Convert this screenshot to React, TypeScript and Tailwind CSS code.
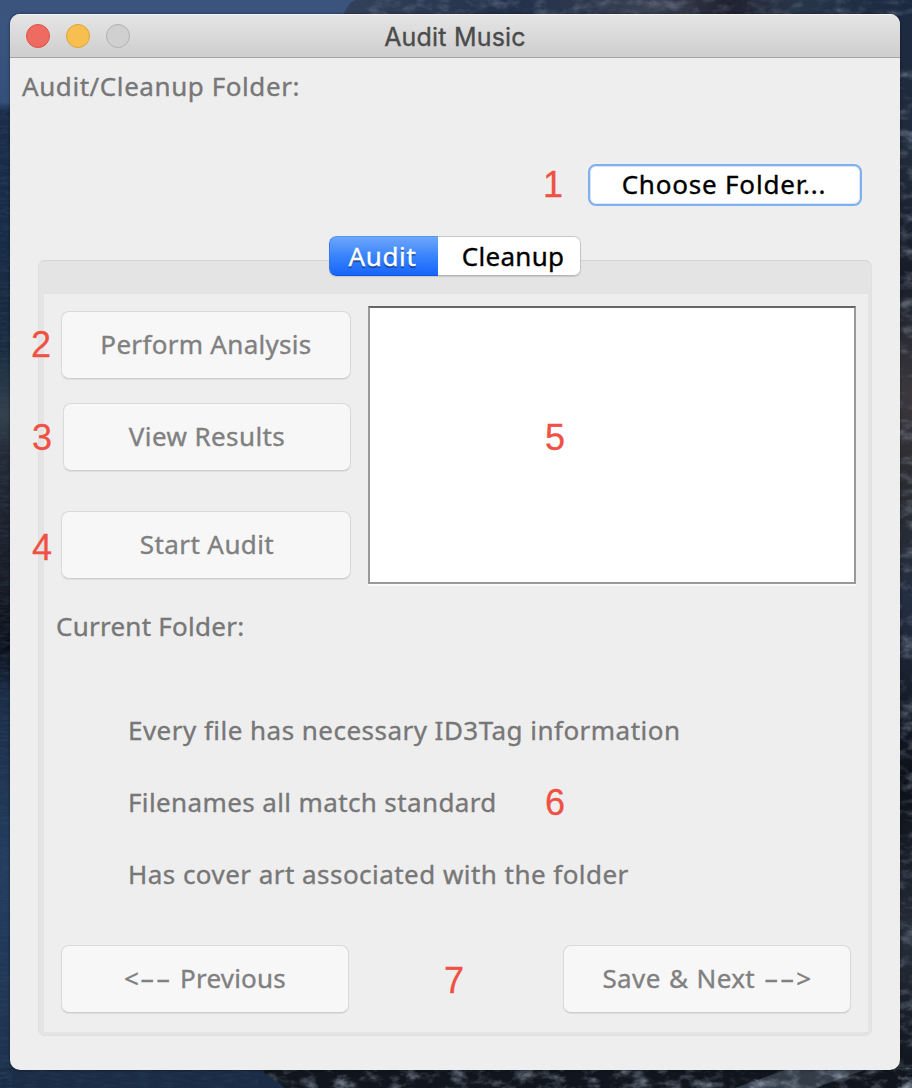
import type { ReactNode } from "react";

const annotations = [
  { n: 1, place: "left-[543px] top-[167px]" },
  { n: 2, place: "left-[31px] top-[327px]" },
  { n: 3, place: "left-[32px] top-[420px]" },
  { n: 4, place: "left-[32px] top-[530px]" },
  { n: 5, place: "left-[545px] top-[420px]" },
  { n: 6, place: "left-[545px] top-[785px]" },
  { n: 7, place: "left-[444px] top-[963px]" },
];

const checks = [
  { text: "Every file has necessary ID3Tag information", spacing: "tracking-[0.47px]" },
  { text: "Filenames all match standard", spacing: "tracking-[0.38px]" },
  { text: "Has cover art associated with the folder", spacing: "tracking-[0.46px]" },
];

function Wallpaper() {
  return (
    <svg className="absolute inset-0 h-full w-full" viewBox="0 0 912 1088" preserveAspectRatio="none" aria-hidden="true">
      <defs>
        <linearGradient id="left" x1="0" y1="0" x2="0" y2="1">
          <stop offset="0" stopColor="#3b5682" />
          <stop offset="0.094" stopColor="#34507a" />
          <stop offset="0.102" stopColor="#1a2c49" />
          <stop offset="0.2" stopColor="#182b46" />
          <stop offset="0.32" stopColor="#182a3d" />
          <stop offset="0.38" stopColor="#34414c" />
          <stop offset="0.42" stopColor="#242935" />
          <stop offset="0.54" stopColor="#191a24" />
          <stop offset="0.595" stopColor="#0b0e17" />
          <stop offset="0.64" stopColor="#1b2d46" />
          <stop offset="0.8" stopColor="#243d60" />
          <stop offset="1" stopColor="#1d314d" />
        </linearGradient>
        <linearGradient id="right" x1="0" y1="0" x2="0" y2="1">
          <stop offset="0" stopColor="#1c2a42" />
          <stop offset="0.15" stopColor="#202a39" />
          <stop offset="0.25" stopColor="#171c28" />
          <stop offset="0.36" stopColor="#3b383d" />
          <stop offset="0.45" stopColor="#292b2f" />
          <stop offset="0.55" stopColor="#232e40" />
          <stop offset="0.72" stopColor="#0c1018" />
          <stop offset="0.86" stopColor="#252d38" />
          <stop offset="1" stopColor="#0e131b" />
        </linearGradient>
        <linearGradient id="ridge" x1="0" y1="0" x2="1" y2="0">
          <stop offset="0" stopColor="#34415a" />
          <stop offset="0.3" stopColor="#22304a" />
          <stop offset="0.55" stopColor="#3a4152" />
          <stop offset="0.68" stopColor="#20212f" />
          <stop offset="0.8" stopColor="#28364a" />
          <stop offset="1" stopColor="#1a2840" />
        </linearGradient>
        <clipPath id="shore">
          <path d="M258 1068 H912 V1088 H285 Z" />
        </clipPath>
        <filter id="rock" x="0" y="0" width="100%" height="100%">
          <feTurbulence type="fractalNoise" baseFrequency="0.06 0.1" numOctaves="5" seed="8" />
          <feColorMatrix values="0.7 0 0 0 -0.1  0.75 0 0 0 -0.06  0.85 0 0 0 -0.02  2.6 0 0 0 -1.15" />
        </filter>
        <filter id="sea" x="0" y="0" width="100%" height="100%">
          <feTurbulence type="fractalNoise" baseFrequency="0.08 0.4" numOctaves="4" seed="3" />
          <feColorMatrix values="0 0 0 0 0.03  0 0 0 0 0.07  0 0 0 0 0.13  1.6 0 0 0 -0.6" />
        </filter>
      </defs>
      <rect width="456" height="1088" fill="url(#left)" />
      <rect x="456" width="456" height="1088" fill="url(#right)" />
      <rect width="912" height="16" fill="#3a547e" />
      <path d="M342 16 L350 3 L355 0 H912 V16 Z" fill="url(#ridge)" />
      <path d="M0 1068 H265 L280 1088 H0 Z" fill="#1a2c46" />
      <path d="M258 1068 H912 V1088 H285 Z" fill="#11161e" />
      <path d="M735 1088 L790 1068 H870 L815 1088 Z" fill="#333c47" />
      <rect x="0" y="105" width="12" height="983" filter="url(#sea)" opacity="0.55" />
      <rect x="0" y="1068" width="258" height="20" filter="url(#sea)" opacity="0.4" />
      <rect x="898" y="60" width="14" height="1028" filter="url(#rock)" opacity="0.35" />
      <g clipPath="url(#shore)">
        <rect x="258" y="1068" width="654" height="20" filter="url(#rock)" opacity="0.5" />
      </g>
      <rect x="356" y="0" width="556" height="16" filter="url(#rock)" opacity="0.25" />
    </svg>
  );
}

function Dashes() {
  return <span className="mx-px inline-block w-[31px] origin-left scale-x-[1.75] text-left tracking-[0.8px]">--</span>;
}

function DisabledButton({ children, size, spacing }: { children: ReactNode; size: string; spacing: string }) {
  return (
    <button
      disabled
      className={`flex h-[68px] items-center justify-center rounded-[8px] border border-[#dadada] border-b-[#cecece] bg-[#f7f7f7] pb-[3px] text-[#808080] shadow-[0_1px_1px_rgba(0,0,0,0.07)] ${size} ${spacing}`}
    >
      <span>{children}</span>
    </button>
  );
}

export default function App() {
  return (
    <main className="relative h-[1088px] w-[912px] overflow-hidden pl-[10px] pt-[14px] font-['Noto_Sans',sans-serif] text-[26px] leading-[36px] whitespace-nowrap">
      <Wallpaper />
      <section className="relative flex h-[1056px] w-[890px] flex-col overflow-hidden rounded-[10px] bg-[#eeeeee] shadow-[0_0_3px_rgba(0,0,0,0.5)] [-webkit-text-stroke:0.35px_currentColor]">
        <header className="grid h-[44px] shrink-0 grid-cols-[1fr_auto_1fr] items-center border-b border-t border-b-[#a5a5a5] border-t-[#f5f5f5] bg-linear-to-b from-[#e5e5e5] to-[#cecece] pl-[16px] pr-[16px]">
          <div className="flex gap-4">
            <span className="size-6 rounded-full border border-[#df5148] bg-[#ed6b60]" />
            <span className="size-6 rounded-full border border-[#dfa13a] bg-[#f6bf50]" />
            <span className="size-6 rounded-full border border-[#b1b1b1] bg-[#d0d0d0]" />
          </div>
          <h1 className="pt-px font-['Inter',sans-serif] text-[25px] font-normal tracking-[0.2px] text-[#4b4b4b]">Audit Music</h1>
        </header>

        <p className="mt-[10px] pl-3 tracking-[0.57px] text-[#777777]">Audit/Cleanup Folder:</p>
        <div className="mt-[60px] flex justify-end pr-[38px]">
          <button className="flex h-[42px] w-[274px] items-center justify-center rounded-[8px] border-2 border-[#7fb0eb] bg-white pb-[3px] pr-[2px] tracking-[0.8px] text-black shadow-[inset_0_0_0_1px_#d7e7fa]">
            Choose Folder...
          </button>
        </div>

        <div className="relative z-10 ml-[319px] mt-[30px] flex h-10 w-[252px] shrink-0 overflow-hidden rounded-[7px] shadow-[0_1px_1px_rgba(0,0,0,0.13)]">
          <button className="flex w-[109px] items-center justify-center rounded-l-[7px] border-y border-l border-b-[#1558e0] border-l-[#3478ea] border-t-[#5b94ec] bg-linear-to-b from-[#6da6fb] via-[#3884fc] to-[#1864fb] pr-[3px] tracking-[0.6px] text-white [text-shadow:0_2px_1px_rgba(0,0,0,0.4)]">
            Audit
          </button>
          <button className="flex flex-1 items-center justify-center rounded-r-[7px] border-y border-r border-[#c6c6c6] border-b-[#b5b5b5] bg-white pl-[8px] tracking-[0.3px] text-black">Cleanup</button>
        </div>

        <section className="-mt-[16px] ml-7 h-[776px] w-[834px] shrink-0 rounded-[7px] border border-[#e0e0e0] border-t-[#d5d5d5] bg-[#e4e4e4] pb-[3px] pl-[5px] pr-[3px] pt-[33px]">
          <div className="flex h-full flex-col bg-[#eeeeee]">
            <div className="mt-[12px] flex justify-between pl-[17px] pr-[12px]">
              <div className="flex w-[290px] flex-col items-end pt-[5px]">
                <DisabledButton size="w-[290px]" spacing="tracking-[0.3px]">Perform Analysis</DisabledButton>
                <div className="mt-6">
                  <DisabledButton size="w-[288px]" spacing="tracking-[0.4px]">View Results</DisabledButton>
                </div>
                <div className="mt-10">
                  <DisabledButton size="w-[290px] pl-[2px]" spacing="tracking-[0.4px]">Start Audit</DisabledButton>
                </div>
              </div>
              <div className="h-[278px] w-[488px] border-2 border-[#999999] border-t-[#666666] bg-white shadow-[0_2px_0_#fafafa]" />
            </div>

            <p className="mt-[24px] pl-[12px] tracking-[0.25px] text-[#777777]">Current Folder:</p>
            <ul className="mt-[68px] flex flex-col gap-9 pl-[84px] text-[#777777]">
              {checks.map((c) => (
                <li key={c.text} className={c.spacing}>{c.text}</li>
              ))}
            </ul>
            <div className="mt-[53px] flex justify-between pl-[17px] pr-[17px]">
              <DisabledButton size="w-[288px]" spacing="tracking-[0.2px] [word-spacing:1px]">&lt;<Dashes /> Previous</DisabledButton>
              <DisabledButton size="w-[288px]" spacing="tracking-[0.4px] [word-spacing:1px]">Save &amp; Next <Dashes />&gt;</DisabledButton>
            </div>
          </div>
        </section>
      </section>

      {annotations.map((a) => (
        <span key={a.n} className={`absolute z-20 font-['Liberation_Sans',sans-serif] text-[36px] leading-none text-[#ef5144] [-webkit-text-stroke:0.3px_currentColor] ${a.place}`}>
          {a.n}
        </span>
      ))}
    </main>
  );
}
